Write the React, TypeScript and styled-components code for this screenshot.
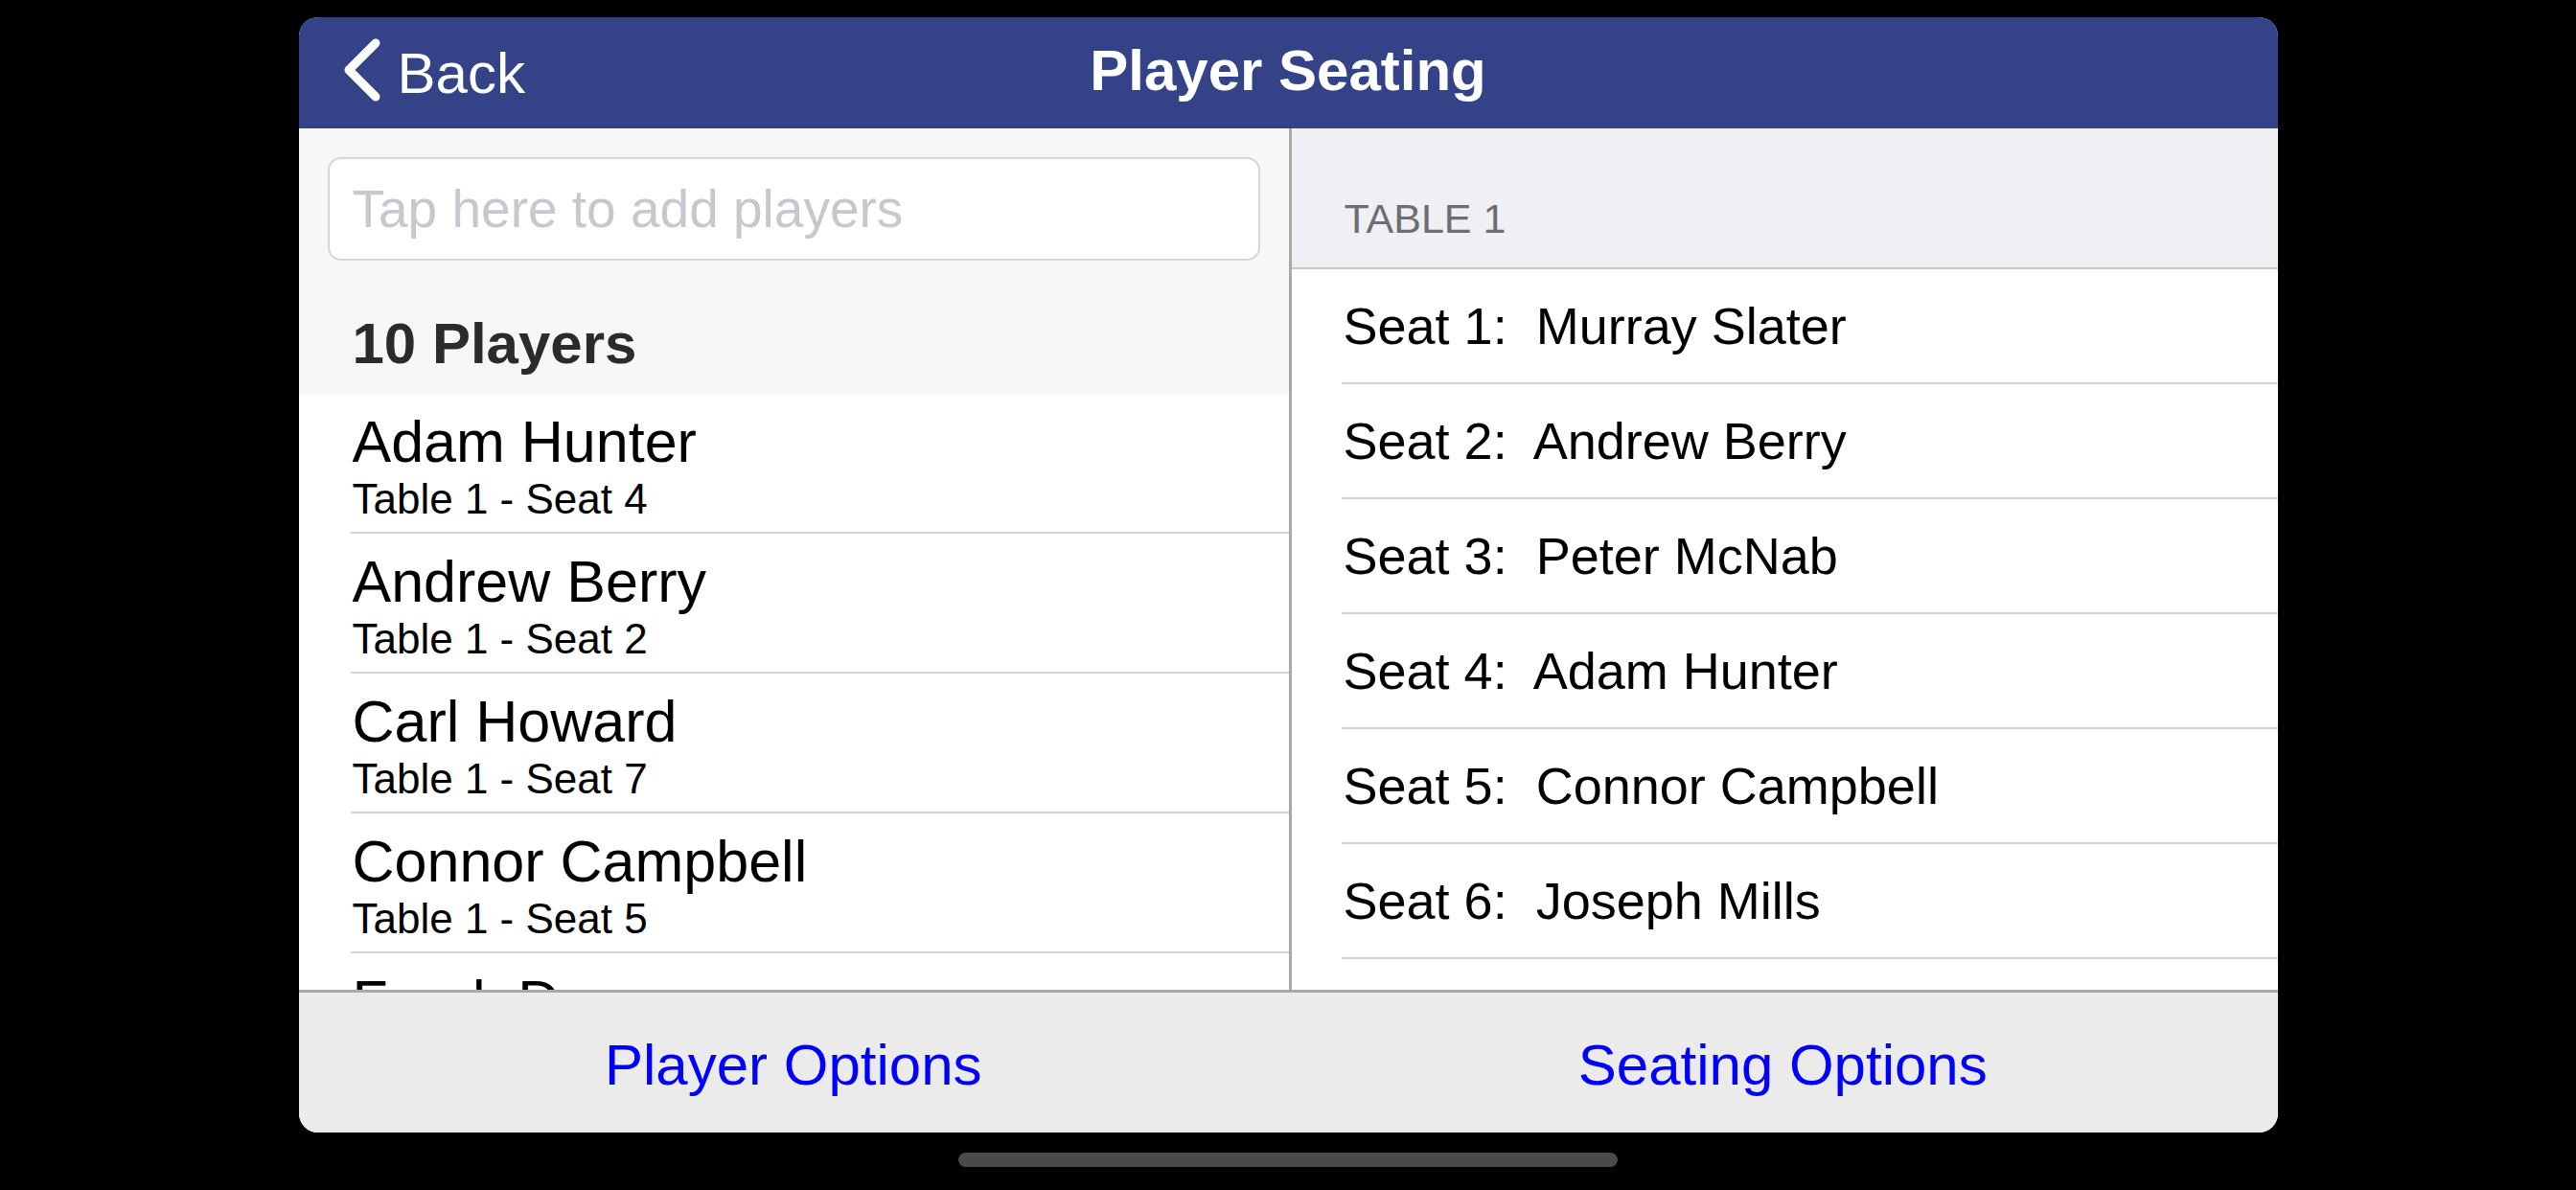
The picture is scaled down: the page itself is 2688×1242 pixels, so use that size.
import styled, {createGlobalStyle} from 'styled-components'

const players = [
  {name: 'Adam Hunter', seat: 'Table 1 - Seat 4'},
  {name: 'Andrew Berry', seat: 'Table 1 - Seat 2'},
  {name: 'Carl Howard', seat: 'Table 1 - Seat 7'},
  {name: 'Connor Campbell', seat: 'Table 1 - Seat 5'},
  {name: 'Frank Duncan', seat: 'Table 1 - Seat 3'},
]

const seats = [
  'Murray Slater',
  'Andrew Berry',
  'Peter McNab',
  'Adam Hunter',
  'Connor Campbell',
  'Joseph Mills',
]

const App = () => {
  return (
    <Screen>
      <GlobalStyle />
      <Card>
        <NavBar>
          <BackButton>
            <svg width='44' height='66' viewBox='0 0 44 66'>
              <polyline
                points='36,5 8,33 36,61'
                fill='none'
                stroke='#fff'
                strokeWidth='9'
                strokeLinecap='round'
                strokeLinejoin='round'
              />
            </svg>
            <span>Back</span>
          </BackButton>
          <NavTitle>Player Seating</NavTitle>
        </NavBar>

        <Body>
          <LeftPanel>
            <LeftTop>
              <SearchBox placeholder='Tap here to add players' />
              <CountHeader>10 Players</CountHeader>
            </LeftTop>
            {players.map(p => (
              <PlayerRow key={p.name}>
                <div className={'playerName'}>{p.name}</div>
                <div className={'playerSeat'}>{p.seat}</div>
              </PlayerRow>
            ))}
          </LeftPanel>

          <Divider />

          <RightPanel>
            <TableHeader>Table 1</TableHeader>
            {seats.map((s, i) => (
              <SeatRow key={s}>
                Seat {i + 1}:{'  '}{s}
              </SeatRow>
            ))}
          </RightPanel>
        </Body>

        <BottomBar>
          <BarButton>Player Options</BarButton>
          <BarButton>Seating Options</BarButton>
        </BottomBar>
      </Card>
      <HomeIndicator />
    </Screen>
  )
}

export default App

const GlobalStyle = createGlobalStyle`
  html, body {
    margin: 0;
    padding: 0;
    background: #000;
  }
  * {
    box-sizing: border-box;
  }
`

const Screen = styled.div`
  width: 2688px;
  height: 1242px;
  background: #000;
  display: flex;
  flex-direction: column;
  align-items: center;
  padding-top: 18px;
  font-family: 'Liberation Sans', Arial, sans-serif;
  overflow: hidden;
`

const Card = styled.div`
  width: 2065px;
  height: 1164px;
  border-radius: 20px;
  overflow: hidden;
  background: #fff;
  display: flex;
  flex-direction: column;
`

const NavBar = styled.div`
  position: relative;
  height: 116px;
  flex-shrink: 0;
  background: #344388;
  display: flex;
  align-items: center;
  justify-content: center;
  padding-bottom: 4px;
`

const BackButton = styled.div`
  position: absolute;
  left: 44px;
  top: 20px;
  display: flex;
  align-items: center;
  gap: 15px;
  color: #fff;
  font-size: 60px;
  line-height: 70px;

  & svg {
    margin-top: -4px;
  }
  & span {
    margin-top: 4px;
  }
`

const NavTitle = styled.div`
  color: #fff;
  font-size: 60px;
  font-weight: bold;
  line-height: 70px;
`

const Body = styled.div`
  flex: 1;
  display: flex;
  min-height: 0;
  overflow: hidden;
`

const LeftPanel = styled.div`
  width: 1033px;
  flex-shrink: 0;
  background: #fff;
  overflow: hidden;
`

const LeftTop = styled.div`
  background: #f7f7f7;
  padding: 30px 30px 0 30px;
`

const SearchBox = styled.input`
  display: block;
  width: 100%;
  height: 108px;
  border: 2px solid #d6d6d8;
  border-radius: 14px;
  background: #fff;
  padding: 0 0 0 24px;
  font-family: 'Liberation Sans', Arial, sans-serif;
  font-size: 55px;
  outline: none;

  &::placeholder {
    color: #c7c7cd;
  }
`

const CountHeader = styled.div`
  padding: 52px 0 17px 26px;
  font-size: 60px;
  line-height: 70px;
  font-weight: bold;
  color: #2b2b2b;
`

const PlayerRow = styled.div`
  margin-left: 54px;
  padding: 15px 0 10px 2px;
  border-bottom: 2px solid #d2d2d4;
  color: #000;

  & .playerName {
    font-size: 61px;
    line-height: 70px;
  }
  & .playerSeat {
    font-size: 44px;
    line-height: 49px;
  }
`

const Divider = styled.div`
  width: 3px;
  flex-shrink: 0;
  background: #a9a9a9;
`

const RightPanel = styled.div`
  flex: 1;
  background: #fff;
  overflow: hidden;
`

const TableHeader = styled.div`
  height: 147px;
  background: #efeff4;
  border-bottom: 2px solid #c8c7cc;
  padding: 69px 0 0 55px;
  font-size: 43px;
  line-height: 50px;
  text-transform: uppercase;
  color: #6d6d72;
`

const SeatRow = styled.div`
  margin-left: 52px;
  height: 120px;
  border-bottom: 2px solid #d2d2d4;
  padding-left: 2px;
  font-size: 54px;
  line-height: 118px;
  color: #000;
  white-space: pre;
`

const BottomBar = styled.div`
  height: 149px;
  flex-shrink: 0;
  display: flex;
  background: #ebebeb;
  border-top: 3px solid #a9a9a9;
`

const BarButton = styled.div`
  flex: 1;
  display: flex;
  align-items: center;
  justify-content: center;
  padding-top: 4px;
  font-size: 60px;
  color: #0000ff;
`

const HomeIndicator = styled.div`
  margin-top: 21px;
  width: 688px;
  height: 15px;
  border-radius: 8px;
  background: #4a4a4a;
`
